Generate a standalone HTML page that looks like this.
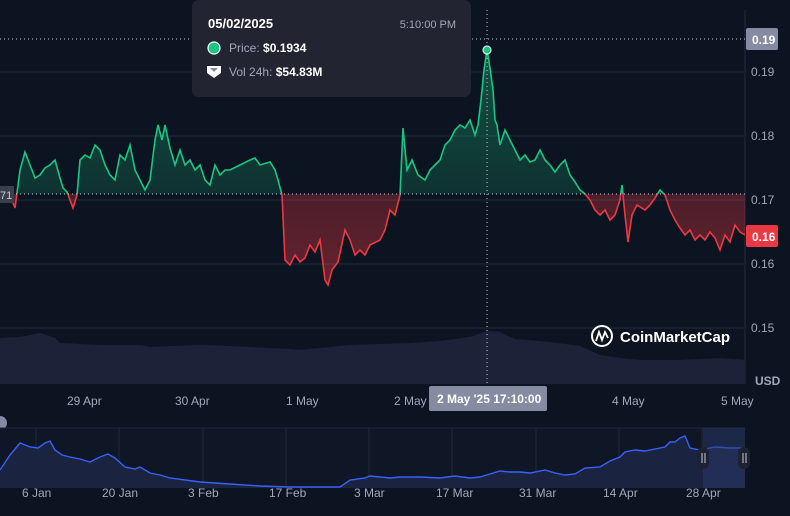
<!DOCTYPE html>
<html><head><style>
body{margin:0;background:#0d1421;width:790px;height:516px;overflow:hidden;font-family:"Liberation Sans",sans-serif}
</style></head><body>
<svg width="790" height="516" xmlns="http://www.w3.org/2000/svg" style="position:absolute;left:0;top:0">
<defs>
<clipPath id="up"><rect x="0" y="0" width="745" height="194"/></clipPath>
<clipPath id="dn"><rect x="0" y="194" width="745" height="200"/></clipPath>
<linearGradient id="gg" x1="0" y1="0" x2="0" y2="1"><stop offset="0" stop-color="#16c784" stop-opacity=".35"/><stop offset="1" stop-color="#16c784" stop-opacity=".05"/></linearGradient>
<linearGradient id="rg" x1="0" y1="0" x2="0" y2="1"><stop offset="0" stop-color="#ea3943" stop-opacity=".1"/><stop offset="1" stop-color="#ea3943" stop-opacity=".4"/></linearGradient>
<path id="p" d="M0,190 L10,195 L15,208 L20,170 L25,152 L30,165 L35,178 L40,175 L45,168 L50,165 L55,160 L60,178 L63,188 L67,192 L70,200 L73,208 L77,195 L80,160 L85,155 L90,158 L95,145 L100,150 L105,165 L110,175 L115,180 L120,155 L125,160 L130,145 L135,170 L140,180 L145,190 L150,180 L155,140 L158,125 L162,140 L165,125 L170,148 L175,165 L180,150 L185,165 L190,160 L195,170 L200,165 L205,180 L210,185 L215,165 L220,175 L225,170 L230,170 L240,165 L250,160 L255,158 L260,165 L270,162 L275,170 L278,180 L282,195 L285,260 L290,265 L295,255 L300,262 L305,258 L310,245 L315,252 L320,240 L325,280 L328,285 L332,270 L338,262 L345,230 L350,240 L355,255 L360,250 L365,255 L370,245 L380,240 L385,230 L390,210 L395,215 L400,195 L403,128 L407,170 L412,160 L418,175 L425,180 L430,170 L440,160 L445,145 L450,140 L455,130 L460,125 L465,128 L470,120 L475,135 L478,125 L481,100 L484,70 L487,50 L490,68 L493,90 L495,120 L497,125 L500,145 L505,130 L510,140 L515,150 L520,160 L525,155 L530,162 L535,160 L540,150 L545,160 L550,165 L555,172 L560,165 L565,160 L570,175 L575,182 L580,190 L585,194 L590,200 L595,210 L600,215 L605,210 L610,220 L615,215 L620,200 L622,185 L625,215 L628,242 L632,215 L637,205 L645,210 L650,205 L655,198 L660,190 L665,195 L670,210 L675,220 L680,228 L685,235 L690,230 L695,240 L700,235 L705,240 L710,232 L715,238 L720,250 L725,235 L730,242 L735,225 L740,232 L745,235"/>
</defs>
<g stroke="#222a3a" stroke-width="1">
<line x1="0" y1="72" x2="745" y2="72"/><line x1="0" y1="136" x2="745" y2="136"/><line x1="0" y1="200" x2="745" y2="200"/><line x1="0" y1="264" x2="745" y2="264"/><line x1="0" y1="328" x2="745" y2="328"/>
<line x1="745" y1="10" x2="745" y2="384"/>
</g>
<path d="M0,384 L0,338 L20,337 L40,333 L55,338 L60,343 L100,345 L140,345 L150,347 L200,345 L230,346 L290,349 L300,350 L330,347 L350,345 L410,343 L440,341 L470,337 L487,331 L500,332 L515,339 L550,342 L580,346 L600,355 L620,358 L640,360 L680,360 L720,358 L745,360 L745,384 Z" fill="#1c2338"/>
<path d="M0,190 L10,195 L15,208 L20,170 L25,152 L30,165 L35,178 L40,175 L45,168 L50,165 L55,160 L60,178 L63,188 L67,192 L70,200 L73,208 L77,195 L80,160 L85,155 L90,158 L95,145 L100,150 L105,165 L110,175 L115,180 L120,155 L125,160 L130,145 L135,170 L140,180 L145,190 L150,180 L155,140 L158,125 L162,140 L165,125 L170,148 L175,165 L180,150 L185,165 L190,160 L195,170 L200,165 L205,180 L210,185 L215,165 L220,175 L225,170 L230,170 L240,165 L250,160 L255,158 L260,165 L270,162 L275,170 L278,180 L282,195 L285,260 L290,265 L295,255 L300,262 L305,258 L310,245 L315,252 L320,240 L325,280 L328,285 L332,270 L338,262 L345,230 L350,240 L355,255 L360,250 L365,255 L370,245 L380,240 L385,230 L390,210 L395,215 L400,195 L403,128 L407,170 L412,160 L418,175 L425,180 L430,170 L440,160 L445,145 L450,140 L455,130 L460,125 L465,128 L470,120 L475,135 L478,125 L481,100 L484,70 L487,50 L490,68 L493,90 L495,120 L497,125 L500,145 L505,130 L510,140 L515,150 L520,160 L525,155 L530,162 L535,160 L540,150 L545,160 L550,165 L555,172 L560,165 L565,160 L570,175 L575,182 L580,190 L585,194 L590,200 L595,210 L600,215 L605,210 L610,220 L615,215 L620,200 L622,185 L625,215 L628,242 L632,215 L637,205 L645,210 L650,205 L655,198 L660,190 L665,195 L670,210 L675,220 L680,228 L685,235 L690,230 L695,240 L700,235 L705,240 L710,232 L715,238 L720,250 L725,235 L730,242 L735,225 L740,232 L745,235 L745,194 L0,194 Z" fill="url(#gg)" clip-path="url(#up)"/>
<path d="M0,190 L10,195 L15,208 L20,170 L25,152 L30,165 L35,178 L40,175 L45,168 L50,165 L55,160 L60,178 L63,188 L67,192 L70,200 L73,208 L77,195 L80,160 L85,155 L90,158 L95,145 L100,150 L105,165 L110,175 L115,180 L120,155 L125,160 L130,145 L135,170 L140,180 L145,190 L150,180 L155,140 L158,125 L162,140 L165,125 L170,148 L175,165 L180,150 L185,165 L190,160 L195,170 L200,165 L205,180 L210,185 L215,165 L220,175 L225,170 L230,170 L240,165 L250,160 L255,158 L260,165 L270,162 L275,170 L278,180 L282,195 L285,260 L290,265 L295,255 L300,262 L305,258 L310,245 L315,252 L320,240 L325,280 L328,285 L332,270 L338,262 L345,230 L350,240 L355,255 L360,250 L365,255 L370,245 L380,240 L385,230 L390,210 L395,215 L400,195 L403,128 L407,170 L412,160 L418,175 L425,180 L430,170 L440,160 L445,145 L450,140 L455,130 L460,125 L465,128 L470,120 L475,135 L478,125 L481,100 L484,70 L487,50 L490,68 L493,90 L495,120 L497,125 L500,145 L505,130 L510,140 L515,150 L520,160 L525,155 L530,162 L535,160 L540,150 L545,160 L550,165 L555,172 L560,165 L565,160 L570,175 L575,182 L580,190 L585,194 L590,200 L595,210 L600,215 L605,210 L610,220 L615,215 L620,200 L622,185 L625,215 L628,242 L632,215 L637,205 L645,210 L650,205 L655,198 L660,190 L665,195 L670,210 L675,220 L680,228 L685,235 L690,230 L695,240 L700,235 L705,240 L710,232 L715,238 L720,250 L725,235 L730,242 L735,225 L740,232 L745,235 L745,194 L0,194 Z" fill="url(#rg)" clip-path="url(#dn)"/>
<use href="#p" fill="none" stroke="#16c784" stroke-width="1.6" clip-path="url(#up)"/>
<use href="#p" fill="none" stroke="#ea3943" stroke-width="1.6" clip-path="url(#dn)"/>
<line x1="0" y1="194" x2="745" y2="194" stroke="#c8ccd4" stroke-dasharray="1 3" stroke-width="1"/>
<line x1="0" y1="39" x2="745" y2="39" stroke="#c8ccd4" stroke-dasharray="1 3" stroke-width="1"/>
<line x1="487" y1="10" x2="487" y2="384" stroke="#c8ccd4" stroke-dasharray="1 3" stroke-width="1"/>
<circle cx="487" cy="50" r="4" fill="#16c784" stroke="#c8f0dd" stroke-width="1.2"/>
<g font-size="12" fill="#a1a7bb">
<text x="751" y="76">0.19</text><text x="751" y="140">0.18</text><text x="751" y="204">0.17</text><text x="751" y="268">0.16</text><text x="751" y="332">0.15</text>
<text x="755" y="385" font-weight="bold">USD</text>
<text x="67" y="405">29 Apr</text><text x="175" y="405">30 Apr</text><text x="286" y="405">1 May</text><text x="394" y="405">2 May</text><text x="612" y="405">4 May</text><text x="721" y="405">5 May</text>
</g>
<rect x="746" y="28" width="32" height="22" rx="2" fill="#858ca2"/><text x="752" y="44" font-size="12" font-weight="bold" fill="#fff">0.19</text>
<rect x="746" y="225" width="32" height="22" rx="2" fill="#ea3943"/><text x="752" y="241" font-size="12" font-weight="bold" fill="#fff">0.16</text>
<rect x="0" y="186" width="14" height="17" fill="#3a3f4c"/><text x="0" y="199" font-size="11" fill="#c8ccd4">71</text>
<rect x="429" y="386" width="118" height="25" rx="2" fill="#858ca2"/><text x="437" y="403" font-size="12" font-weight="bold" fill="#fff">2 May '25 17:10:00</text>
<g fill="none" stroke="#fff" stroke-width="2"><circle cx="602" cy="336" r="10"/></g>
<path d="M596,341 L599,332 L602,340 L605,332 L608,338" fill="none" stroke="#fff" stroke-width="1.8"/>
<text x="620" y="342" font-size="15" font-weight="bold" fill="#fff">CoinMarketCap</text>
<circle cx="0" cy="423" r="7" fill="#858ca2"/>
<rect x="0" y="428" width="745" height="60" fill="#0f1626"/>
<g stroke="#222a3a"><line x1="36" y1="428" x2="36" y2="488"/><line x1="119" y1="428" x2="119" y2="488"/><line x1="203" y1="428" x2="203" y2="488"/><line x1="286" y1="428" x2="286" y2="488"/><line x1="369" y1="428" x2="369" y2="488"/><line x1="452" y1="428" x2="452" y2="488"/><line x1="536" y1="428" x2="536" y2="488"/><line x1="619" y1="428" x2="619" y2="488"/><line x1="702" y1="428" x2="702" y2="488"/><line x1="0" y1="428" x2="745" y2="428"/></g>
<path d="M0,470 L10,455 L20,443 L30,447 L38,448 L45,443 L50,441 L55,450 L62,455 L70,457 L80,459 L90,462 L100,457 L108,454 L115,458 L125,467 L135,469 L140,467 L150,473 L160,475 L170,478 L200,482 L230,484 L260,486 L290,487 L320,487 L340,487 L350,480 L365,478 L370,476 L380,477 L390,478 L400,477 L410,477 L420,477 L440,478 L455,476 L470,478 L480,477 L490,474 L500,471 L510,472 L520,472 L530,473 L545,470 L555,473 L565,475 L575,474 L585,468 L600,467 L610,461 L620,457 L625,452 L635,450 L645,451 L655,449 L665,447 L670,442 L675,442 L680,438 L685,436 L690,448 L700,450 L715,447 L730,448 L745,448 L745,488 L0,488 Z" fill="#1a2340"/>
<path d="M0,470 L10,455 L20,443 L30,447 L38,448 L45,443 L50,441 L55,450 L62,455 L70,457 L80,459 L90,462 L100,457 L108,454 L115,458 L125,467 L135,469 L140,467 L150,473 L160,475 L170,478 L200,482 L230,484 L260,486 L290,487 L320,487 L340,487 L350,480 L365,478 L370,476 L380,477 L390,478 L400,477 L410,477 L420,477 L440,478 L455,476 L470,478 L480,477 L490,474 L500,471 L510,472 L520,472 L530,473 L545,470 L555,473 L565,475 L575,474 L585,468 L600,467 L610,461 L620,457 L625,452 L635,450 L645,451 L655,449 L665,447 L670,442 L675,442 L680,438 L685,436 L690,448 L700,450 L715,447 L730,448 L745,448" fill="none" stroke="#3861fb" stroke-width="1.4"/>
<rect x="703" y="428" width="42" height="60" fill="#2a3a6a" opacity=".5"/>
<rect x="697" y="447" width="12" height="22" rx="6" fill="#1c2232"/><rect x="738" y="447" width="12" height="22" rx="6" fill="#1c2232"/>
<g stroke="#c8ccd4" stroke-width="1"><line x1="702" y1="453" x2="702" y2="463"/><line x1="705" y1="453" x2="705" y2="463"/><line x1="743" y1="453" x2="743" y2="463"/><line x1="746" y1="453" x2="746" y2="463"/></g>
<g font-size="12" fill="#a1a7bb">
<text x="22" y="497">6 Jan</text><text x="102" y="497">20 Jan</text><text x="188" y="497">3 Feb</text><text x="269" y="497">17 Feb</text><text x="354" y="497">3 Mar</text><text x="436" y="497">17 Mar</text><text x="519" y="497">31 Mar</text><text x="603" y="497">14 Apr</text><text x="686" y="497">28 Apr</text>
</g>
<rect x="192" y="0" width="279" height="97" rx="7" fill="#222531"/>
<text x="208" y="28" font-size="13" font-weight="bold" fill="#fff">05/02/2025</text>
<text x="456" y="28" font-size="11" fill="#a1a7bb" text-anchor="end">5:10:00 PM</text>
<circle cx="214" cy="48" r="6" fill="#16c784" stroke="#fff" stroke-width="1.2"/>
<text x="229" y="52" font-size="12" fill="#a1a7bb">Price: <tspan fill="#fff" font-weight="bold">$0.1934</tspan></text>
<path d="M207,66 L221,66 L221,73 L214,78 L207,73 Z" fill="#fff"/><path d="M210,68 L218,68 L214,72 Z" fill="#858ca2"/>
<text x="229" y="76" font-size="12" fill="#a1a7bb">Vol 24h: <tspan fill="#fff" font-weight="bold">$54.83M</tspan></text>
</svg>
</body></html>
